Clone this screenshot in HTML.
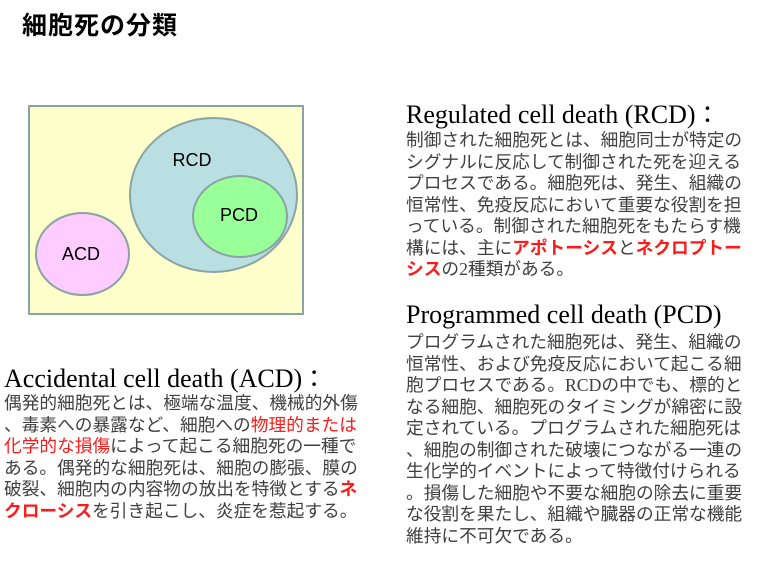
<!DOCTYPE html>
<html><head><meta charset="utf-8"><style>
body{margin:0;width:768px;height:570px;background:#fff;position:relative;overflow:hidden}
.t{position:absolute;left:22px;top:6px;font:bold 25px "Liberation Sans","Noto Sans CJK JP",sans-serif;color:#000;letter-spacing:1px}
.h{position:absolute;font:26px "Liberation Serif",serif;color:#000;white-space:nowrap}
.c{font-family:"Noto Sans CJK JP",sans-serif;font-size:24px}
.p{position:absolute;font:17.7px/21.5px "Liberation Serif","Noto Sans CJK JP",sans-serif;color:#404040;white-space:nowrap}
.r{color:#ff1a1a}
.b{color:#ff1a1a;font-weight:bold}
</style></head><body>
<div class="t">細胞死の分類</div>
<svg style="position:absolute;left:0;top:0" width="320" height="320">
<rect x="29" y="106" width="274" height="208" fill="#ffffcc" stroke="#8aa3a3" stroke-width="2"/>
<ellipse cx="213.5" cy="195" rx="83.5" ry="77" fill="#b9dfe3" stroke="#8aa3a3" stroke-width="2"/>
<ellipse cx="240" cy="216.5" rx="47" ry="40.5" fill="#99ff99" stroke="#8aa3a3" stroke-width="2"/>
<ellipse cx="82.5" cy="254" rx="46.5" ry="41" fill="#ffccff" stroke="#8aa3a3" stroke-width="2"/>
<g font-family="Liberation Sans, sans-serif" font-size="18" fill="#000" text-anchor="middle">
<text x="192" y="166">RCD</text><text x="239" y="221">PCD</text><text x="81" y="260">ACD</text></g>
</svg>
<div class="h" style="left:406px;top:95px">Regulated cell death (RCD)<span class="c">：</span></div>
<div class="p" style="left:406px;top:130px">制御された細胞死とは、細胞同士が特定の<br>シグナルに反応して制御された死を迎える<br>プロセスである。細胞死は、発生、組織の<br>恒常性、免疫反応において重要な役割を担<br>っている。制御された細胞死をもたらす機<br>構には、主に<span class="b">アポトーシス</span>と<span class="b">ネクロプトー<br>シス</span>の2種類がある。</div>
<div class="h" style="left:406px;top:300px">Programmed cell death (PCD)</div>
<div class="p" style="left:406px;top:332px">プログラムされた細胞死は、発生、組織の<br>恒常性、および免疫反応において起こる細<br>胞プロセスである。RCDの中でも、標的と<br>なる細胞、細胞死のタイミングが綿密に設<br>定されている。プログラムされた細胞死は<br>、細胞の制御された破壊につながる一連の<br>生化学的イベントによって特徴付けられる<br>。損傷した細胞や不要な細胞の除去に重要<br>な役割を果たし、組織や臓器の正常な機能<br>維持に不可欠である。</div>
<div class="h" style="left:4px;top:359px">Accidental cell death (ACD)<span class="c">：</span></div>
<div class="p" style="left:4px;top:393px">偶発的細胞死とは、極端な温度、機械的外傷<br>、毒素への暴露など、細胞への<span class="r">物理的または<br>化学的な損傷</span>によって起こる細胞死の一種で<br>ある。偶発的な細胞死は、細胞の膨張、膜の<br>破裂、細胞内の内容物の放出を特徴とする<span class="b">ネ<br>クローシス</span>を引き起こし、炎症を惹起する。</div>
</body></html>
